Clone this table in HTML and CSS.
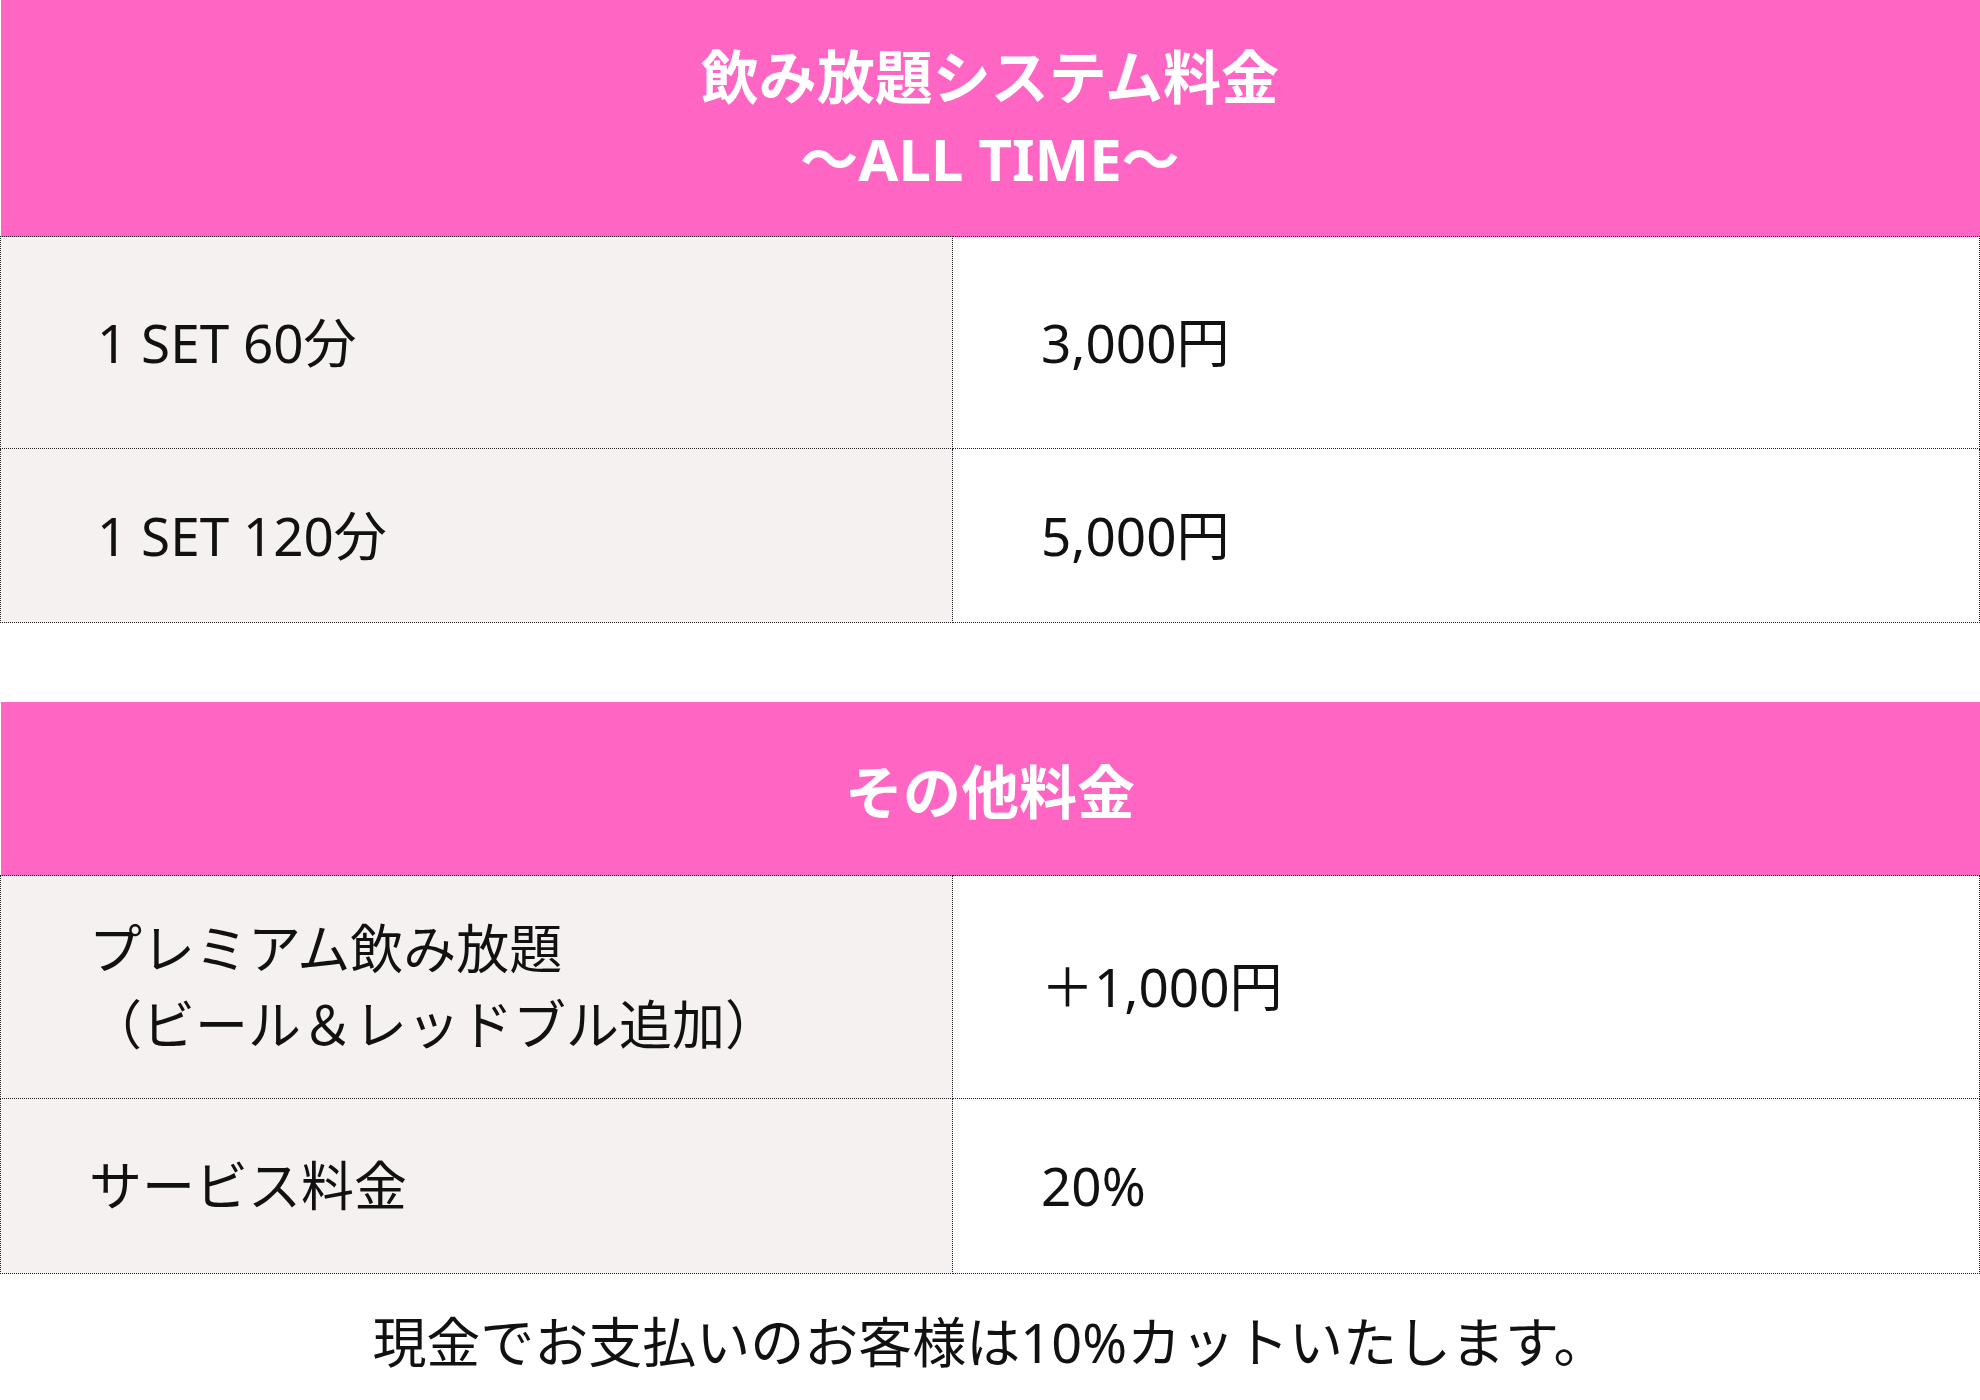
FILE: index.html
```html
<!DOCTYPE html>
<html lang="ja">
<head>
    <meta charset="UTF-8">
    <meta name="viewport" content="width=device-width, initial-scale=1.0">
    <title>料金システム</title>
    <link rel="stylesheet" href="styles.css">
</head>
<body>
    <div class="price-page">
        <table class="price-table">
            <colgroup>
                <col class="col-label">
                <col>
            </colgroup>
            <thead>
                <tr>
                    <th colspan="2" class="head head-main">飲み放題システム料金<br>〜ALL TIME〜</th>
                </tr>
            </thead>
            <tbody>
                <tr class="row-tall">
                    <td class="label label-set">1 SET 60分</td>
                    <td class="value">3,000円</td>
                </tr>
                <tr class="row-short">
                    <td class="label label-set">1 SET 120分</td>
                    <td class="value">5,000円</td>
                </tr>
            </tbody>
        </table>

        <table class="price-table other">
            <colgroup>
                <col class="col-label">
                <col>
            </colgroup>
            <thead>
                <tr>
                    <th colspan="2" class="head head-other">その他料金</th>
                </tr>
            </thead>
            <tbody>
                <tr class="row-premium">
                    <td class="label">プレミアム飲み放題<br>（ビール＆レッドブル追加）</td>
                    <td class="value">＋1,000円</td>
                </tr>
                <tr class="row-service">
                    <td class="label">サービス料金</td>
                    <td class="value">20%</td>
                </tr>
            </tbody>
        </table>

        <p class="note">現金でお支払いのお客様は10%カットいたします。</p>
    </div>
</body>
</html>
```

FILE: styles.css
```css
body {
    margin: 0;
    background: #fff;
    color: #111;
    font-family: "Noto Sans", "Noto Sans CJK JP", sans-serif;
}

.price-page {
    width: 1980px;
}

.price-table {
    width: 100%;
    border-collapse: collapse;
    table-layout: fixed;
}

.price-table.other {
    margin-top: 79px;
}

.col-label {
    width: 952px;
}

.head {
    background: #ff66c4;
    color: #fff;
    font-weight: 700;
    font-size: 58px;
    padding: 0;
}

.head-main {
    height: 236px;
    line-height: 82px;
}

.head-other {
    height: 173px;
}

.price-table td {
    border: 1px dotted #222;
    font-size: 53px;
    line-height: 76px;
    padding: 0 0 0 88px;
}

.label {
    background: #f4f1f0;
}

.price-table td.label-set {
    padding-left: 96px;
}

.value {
    background: #fff;
}

.row-tall td {
    height: 211px;
}

.row-short td {
    height: 173px;
}

.row-premium td {
    height: 222px;
}

.row-service td {
    height: 174px;
}

.note {
    margin: 0;
    padding-top: 28px;
    text-align: center;
    font-size: 54px;
    line-height: 80px;
}
```
